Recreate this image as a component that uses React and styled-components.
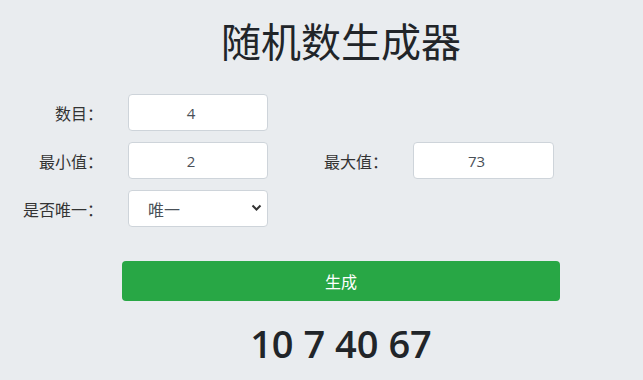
import styled, { createGlobalStyle } from "styled-components";

const GlobalStyle = createGlobalStyle`
  html, body {
    margin: 0;
    padding: 0;
    background-color: #e9ecef;
  }
  body {
    font-family: "Open Sans", "Noto Sans CJK SC", sans-serif;
    color: #212529;
  }
`;

const Page = styled.div`
  box-sizing: border-box;
  width: 643px;
  padding-top: 16px;
`;

// the centred column sits a little right of the window centre
const Centered = styled.div`
  box-sizing: border-box;
  padding-left: 39px;
  text-align: center;
`;

const Title = styled.h1`
  margin: 0;
  font-family: "Noto Sans CJK SC", sans-serif;
  font-size: 40px;
  font-weight: 400;
  line-height: 48px;
  color: #212529;
`;

const Form = styled.div`
  display: grid;
  grid-template-columns: 103px 140px 95px 141px;
  grid-auto-rows: 37px;
  column-gap: 25px;
  row-gap: 11px;
  margin-top: 30px;
`;

const Label = styled.label`
  display: flex;
  align-items: center;
  justify-content: flex-end;
  font-family: "Noto Sans CJK SC", sans-serif;
  font-size: 16px;
  color: #333;
  white-space: nowrap;
`;

const NumberInput = styled.input`
  box-sizing: border-box;
  width: 100%;
  height: 37px;
  border: 1px solid #ced4da;
  border-radius: 4px;
  background: #fff;
  font-family: "Open Sans", sans-serif;
  font-size: 15px;
  color: #495057;
  text-align: center;
  padding: 0 22px 0 8px;
  outline: none;
  -moz-appearance: textfield;
  &::-webkit-inner-spin-button,
  &::-webkit-outer-spin-button {
    -webkit-appearance: none;
    margin: 0;
  }
`;

const SelectWrap = styled.div`
  position: relative;
  width: 100%;
  height: 37px;
`;

const Select = styled.select`
  box-sizing: border-box;
  width: 100%;
  height: 37px;
  border: 1px solid #ced4da;
  border-radius: 4px;
  background: #fff;
  font-family: "Noto Sans CJK SC", sans-serif;
  font-size: 16px;
  color: #495057;
  padding: 0 0 0 19px;
  appearance: none;
  -webkit-appearance: none;
  outline: none;
`;

const Chevron = styled.svg`
  position: absolute;
  right: 6px;
  top: 14px;
  width: 11px;
  height: 8px;
  pointer-events: none;
`;

const ButtonRow = styled(Centered)`
  margin-top: 34px;
`;

const Button = styled.button`
  box-sizing: border-box;
  width: 438px;
  height: 40px;
  border: none;
  border-radius: 4px;
  background-color: #28a745;
  color: #fff;
  font-family: "Noto Sans CJK SC", sans-serif;
  font-size: 16px;
  cursor: pointer;
`;

const Result = styled(Centered)`
  margin-top: 19px;
  font-family: "Open Sans", sans-serif;
  font-weight: 600;
  font-size: 38px;
  line-height: 46px;
  color: #212529;
`;

const App = () => {
  return (
    <Page>
      <GlobalStyle />
      <Centered>
        <Title>随机数生成器</Title>
      </Centered>
      <Form>
        <Label>数目：</Label>
        <NumberInput type="number" defaultValue={4} />
        <span />
        <span />

        <Label>最小值：</Label>
        <NumberInput type="number" defaultValue={2} />
        <Label>最大值：</Label>
        <NumberInput type="number" defaultValue={73} />

        <Label>是否唯一：</Label>
        <SelectWrap>
          <Select defaultValue="unique">
            <option value="unique">唯一</option>
            <option value="repeat">可重复</option>
          </Select>
          <Chevron viewBox="0 0 11 8">
            <path d="M1.5 1.5 L5.5 5.5 L9.5 1.5" fill="none" stroke="#333" strokeWidth="2" />
          </Chevron>
        </SelectWrap>
      </Form>
      <ButtonRow>
        <Button>生成</Button>
      </ButtonRow>
      <Result>10 7 40 67</Result>
    </Page>
  );
};

export default App;
